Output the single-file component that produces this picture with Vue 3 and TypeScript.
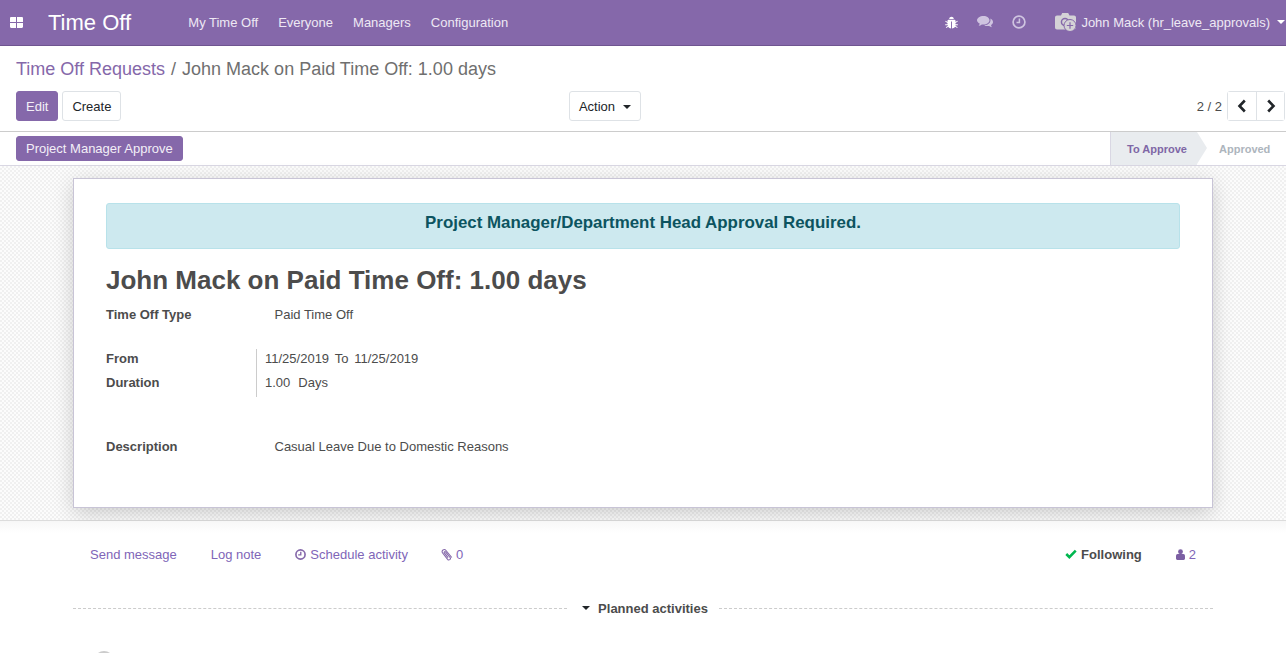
<script setup lang="ts">
const menus: string[] = ['My Time Off', 'Everyone', 'Managers', 'Configuration']
</script>

<template>
  <div class="app">
    <header class="nav">
      <svg class="apps" viewBox="0 0 13 11" width="13" height="11"><path fill="#fff" d="M0 1.2C0 .5.5 0 1.2 0H6v5H0zM7 0h4.8c.7 0 1.2.5 1.2 1.2V5H7zM0 6h6v5H1.2C.5 11 0 10.500 0 9.800zM7 6h6v3.800c0 .7-.5 1.200-1.200 1.200H7z"/></svg>
      <span class="brand">Time Off</span>
      <nav class="menu"><a v-for="m in menus" :key="m">{{ m }}</a></nav>
      <div class="systray">
        <svg class="bug" viewBox="0 0 14 14" width="13" height="13"><path fill="#fff" d="M4.500 3.200C4.700 1.600 5.700.8 7 .8s2.300.8 2.500 2.400zM3.700 4h6.600c.5 0 .9.400 1 .8v1.600l2-1.200.5.800-2.500 1.500v1.400h2.500v1h-2.500v.7l2.300 1.600-.5.800-2.100-1.400C9.900 12.700 8.900 13.300 7.500 13.400V5.800h-1v7.600c-1.400-.1-2.400-.7-3-1.800l-2.100 1.400-.5-.8 2.300-1.600v-.7H.2v-1h2.500V7.500L.2 6l.5-.8 2 1.200V4.800c.1-.4.500-.8 1-.8z"/></svg>
        <svg class="chat" viewBox="0 0 16 14" width="16" height="14"><path fill="#cfc4e0" d="M6.500 1C10 1 12.500 3 12.500 5.300S10 9.600 6.500 9.600c-.6 0-1.200-.1-1.700-.2C3.900 10.200 2.800 10.700 1.600 10.800c.6-.7 1-1.400 1.100-2.200C1.100 7.800 0 6.600 0 5.300 0 3 3 1 6.500 1z"/><path fill="#cfc4e0" d="M13.400 3.600C15 4.400 16 5.700 16 7.100c0 1.200-.8 2.300-2 3 .1.800.5 1.500 1 2.100-1.100-.1-2.100-.6-2.900-1.300-.5.100-1 .2-1.600.2-1.300 0-2.500-.3-3.400-.9 4 .2 7.100-2.300 6.300-6.600z"/></svg>
        <svg class="clock" viewBox="0 0 14 14" width="14" height="14"><circle cx="7" cy="7" r="5.900" fill="none" stroke="#cfc4e0" stroke-width="1.700"/><path d="M7.400 3.500v4H4.500" fill="none" stroke="#cfc4e0" stroke-width="1.500"/></svg>
        <div class="user">
          <svg class="avatar" viewBox="0 0 22 20" width="22" height="20"><path fill="#d4d2d6" d="M2 3.500h4L7.200 1h6L14.500 3.500H19c1.100 0 2 .9 2 2v10c0 1.100-.9 2-2 2H2c-1.100 0-2-.9-2-2v-10c0-1.100.9-2 2-2z"/><circle cx="10" cy="10" r="4.300" fill="#8568aa"/><circle cx="10" cy="10" r="2.800" fill="#d4d2d6"/><circle cx="15" cy="13.500" r="6" fill="#d4d2d6" stroke="#8568aa" stroke-width="1"/><path d="M15 10.300v6.400M11.800 13.500h6.400" stroke="#8568aa" stroke-width="1.200"/></svg>
          <span>John Mack (hr_leave_approvals)</span>
          <i class="caret white"></i>
        </div>
      </div>
    </header>

    <section class="control">
      <div class="crumbs"><a>Time Off Requests</a><span class="sep">/</span><span class="cur">John Mack on Paid Time Off: 1.00 days</span></div>
      <div class="btnrow">
        <div class="left">
          <button class="btn primary">Edit</button>
          <button class="btn plain">Create</button>
        </div>
        <button class="btn plain action">Action <i class="caret dark"></i></button>
        <div class="pager">
          <span>2 / 2</span>
          <div class="pgroup">
            <button aria-label="previous"><svg viewBox="0 0 10 14" width="10" height="14"><path d="M7.800 1.500 2.500 7l5.300 5.500" fill="none" stroke="#212529" stroke-width="2.600"/></svg></button>
            <button aria-label="next"><svg viewBox="0 0 10 14" width="10" height="14"><path d="M2.200 1.500 7.500 7l-5.300 5.500" fill="none" stroke="#212529" stroke-width="2.600"/></svg></button>
          </div>
        </div>
      </div>
    </section>

    <section class="statusbar">
      <button class="btn primary small">Project Manager Approve</button>
      <div class="steps">
        <div class="step active">To Approve</div>
        <div class="step">Approved</div>
      </div>
    </section>

    <main class="bg">
      <article class="sheet">
        <div class="alert">Project Manager/Department Head Approval Required.</div>
        <h1>John Mack on Paid Time Off: 1.00 days</h1>
        <div class="row type"><label>Time Off Type</label><span class="val">Paid Time Off</span></div>
        <div class="group">
          <div class="labels"><label>From</label><label>Duration</label></div>
          <div class="vals">
            <div class="dates"><span>11/25/2019</span><span>To</span><span>11/25/2019</span></div>
            <div class="dates wide"><span>1.00</span><span>Days</span></div>
          </div>
        </div>
        <div class="row desc"><label>Description</label><span class="val">Casual Leave Due to Domestic Reasons</span></div>
      </article>
    </main>

    <section class="chatter">
      <div class="topbar">
        <div class="acts">
          <a>Send message</a>
          <a>Log note</a>
          <a class="iconed"><svg viewBox="0 0 12 12" width="11" height="11"><circle cx="6" cy="6" r="5" fill="none" stroke="#8568aa" stroke-width="1.800"/><path d="M6.300 3v3.400H3.500" fill="none" stroke="#8568aa" stroke-width="1.500"/></svg>Schedule activity</a>
          <a class="iconed clip"><svg viewBox="0 0 12 13" width="12" height="13"><path d="M10.800 9.500 5 2.500C4.200 1.500 3 1.300 2 2s-1.200 2-.4 3l5 6.300c.6.700 1.500.8 2.200.3s.8-1.400.3-2.100L4.500 3.900c-.3-.4-.8-.4-1.100-.1s-.4.700-.1 1.100l3.800 4.800" fill="none" stroke="#8568aa" stroke-width="1.100"/></svg>0</a>
        </div>
        <div class="follow">
          <span class="following"><svg viewBox="0 0 13 11" width="12" height="10"><path d="M1.300 5.500 4.700 9 11.700 1.700" fill="none" stroke="#00b74f" stroke-width="2.800"/></svg>Following</span>
          <a class="iconed"><svg viewBox="0 0 10 12" width="9" height="11"><circle cx="5" cy="3" r="2.700" fill="#7c5fa3"/><path fill="#7c5fa3" d="M1.800 5.500h6.400C9.300 5.500 10 6.500 10 8v2.500c0 .8-.7 1.500-1.500 1.500h-7C.7 12 0 11.300 0 10.500V8c0-1.500.7-2.500 1.800-2.500z"/></svg>2</a>
        </div>
      </div>
      <div class="divider">
        <span class="dash"></span>
        <span class="dtitle"><i class="caret dark"></i>Planned activities</span>
        <span class="dash"></span>
      </div>
      <div class="activity"><span class="pic"></span></div>
    </section>
  </div>
</template>

<style>
html, body { margin: 0; height: 100%; overflow: hidden; background: #fff; }
</style>

<style scoped>
.app { height: 653px; overflow: hidden; font-family: "Liberation Sans", Arial, sans-serif; font-size: 13px; color: #4c4c4c; background: #fff; }
a { color: #8065b8; }
.nav { height: 45px; border-bottom: 1px solid #6f5590; background: #8568aa; display: flex; align-items: center; color: #fff; }
.apps { margin-left: 10px; margin-top: -1px; }
.brand { font-size: 22px; margin-left: 25px; line-height: 45px; width: 139px; flex: none; margin-top: -1px; }
.menu { display: flex; gap: 20px; margin-left: 1.300px; margin-top: -1px; }
.menu a { color: #eee8f4; }
.systray { margin-left: auto; display: flex; align-items: center; margin-top: -1px; }
.chat { margin-left: 19px; }
.clock { margin-left: 19px; }
.user { display: flex; align-items: center; margin-left: 29px; color: #eee8f4; padding-right: 1px; }
.avatar { margin-right: 4px; }
.caret { display: inline-block; width: 0; height: 0; border-left: 4px solid transparent; border-right: 4px solid transparent; border-top: 4px solid currentColor; vertical-align: 2px; }
.caret.white { color: #fff; margin-left: 7px; }
.caret.dark { color: #212529; }
.control { height: 85px; border-bottom: 1px solid #ccc; padding: 0 1px 0 16px; box-sizing: content-box; }
.crumbs { font-size: 18px; line-height: 22px; padding-top: 12px; color: #6f6f6f; display: flex; }
.crumbs a { color: #8568aa; }
.sep { margin: 0 6px; }
.btnrow { display: flex; align-items: center; margin-top: 11px; height: 30px; }
.left { display: flex; gap: 4px; }
.btn { font: inherit; box-sizing: border-box; height: 30px; border-radius: 3px; padding: 0 9px; cursor: pointer; }
.primary { background: #8568aa; border: 1px solid #8568aa; color: #f3eff7; }
.plain { background: #fff; border: 1px solid #dee2e6; color: #212529; }
.action { margin-left: 448px; padding: 0 9.500px 0 8.500px; }
.action .caret { margin-left: 4px; }
.pager { margin-left: auto; display: flex; align-items: center; gap: 5px; }
.pgroup { display: flex; border: 1px solid #dee2e6; border-radius: 3px; height: 30px; box-sizing: border-box; }
.pgroup button { width: 28px; padding: 0; background: #fff; border: 0; display: flex; align-items: center; justify-content: center; }
.pgroup button + button { border-left: 1px solid #dee2e6; width: 28px; }
.statusbar { height: 33px; border-bottom: 1px solid #d9d7e3; display: flex; justify-content: space-between; padding-left: 16px; }
.small { height: 25px; margin-top: 4px; border-radius: 3px; }
.steps { display: flex; height: 33px; font-size: 11px; font-weight: 700; line-height: 35px; }
.step { color: #adb5bd; padding: 0 16px 0 10px; width: 51px; text-align: left; }
.step.active { position: relative; background: #e9ecef; color: #7f67a6; padding: 0 6px 0 16px; width: 64px; border-left: 1px solid #d9d7e3; margin-right: 12px; white-space: nowrap; }
.step.active::after { content: ""; position: absolute; left: 100%; top: 0; border-top: 16.500px solid transparent; border-bottom: 16.500px solid transparent; border-left: 10px solid #e9ecef; }
.bg { height: 355px; box-sizing: border-box; padding-top: 12px; border-bottom: 1px solid #dcdcdc; background-color: #fff; background-image: conic-gradient(#f0f0f0 25%, #fcfcfc 0 50%, #f0f0f0 0 75%, #fcfcfc 0); background-size: 4px 4px; }
.sheet { width: 1140px; height: 330px; box-sizing: border-box; margin-left: 73px; padding: 24px 32px 0; background: #fff; border: 1px solid #c8c4d6; box-shadow: 0 5px 20px -1px rgba(0,0,0,.2); }
.alert { height: 46px; box-sizing: border-box; background: #cde9ef; border: 1px solid #b8e2ea; border-radius: 3px; color: #0c5460; font-size: 16.900px; font-weight: 700; text-align: center; line-height: 38px; }
h1 { margin: 15px 0 0; font-size: 26px; line-height: 32px; color: #4c4c4c; font-weight: 700; }
label { font-weight: 700; display: block; }
.row { display: flex; line-height: 18px; }
.row label { width: 168.500px; }
.type { margin-top: 10px; }
.group { display: flex; margin-top: 25px; }
.labels { width: 150px; border-right: 1px solid #ccc; }
.labels label { line-height: 20px; height: 24px; }
.vals { padding-left: 8px; }
.dates { display: flex; gap: 5.700px; line-height: 20px; height: 24px; }
.dates.wide { gap: 8px; }
.desc { margin-top: 41px; }
.chatter { padding: 0 73px; background: linear-gradient(#f7f7f7, #fff 12px) no-repeat; background-size: 100% 14px; }
.topbar { height: 68px; display: flex; justify-content: space-between; align-items: center; box-sizing: border-box; padding: 0 17px 2px; }
.acts { display: flex; gap: 34px; }
.iconed { display: inline-flex; align-items: center; gap: 4px; }
.clip { gap: 3px; margin-left: -1px; }
.follow { display: flex; gap: 34px; align-items: center; }
.following { display: inline-flex; align-items: center; gap: 4px; font-weight: 700; color: #4c4c4c; }
.divider { display: flex; align-items: center; height: 38px; }
.dash { flex: 1; border-top: 1px dashed #ccc; }
.dtitle { font-weight: 700; margin: 0 11px 0 15px; display: flex; align-items: center; gap: 8px; }
.activity { padding: 24px 0 0 21px; }
.pic { display: block; width: 20px; height: 20px; border-radius: 50%; background: #ccc; }
</style>
